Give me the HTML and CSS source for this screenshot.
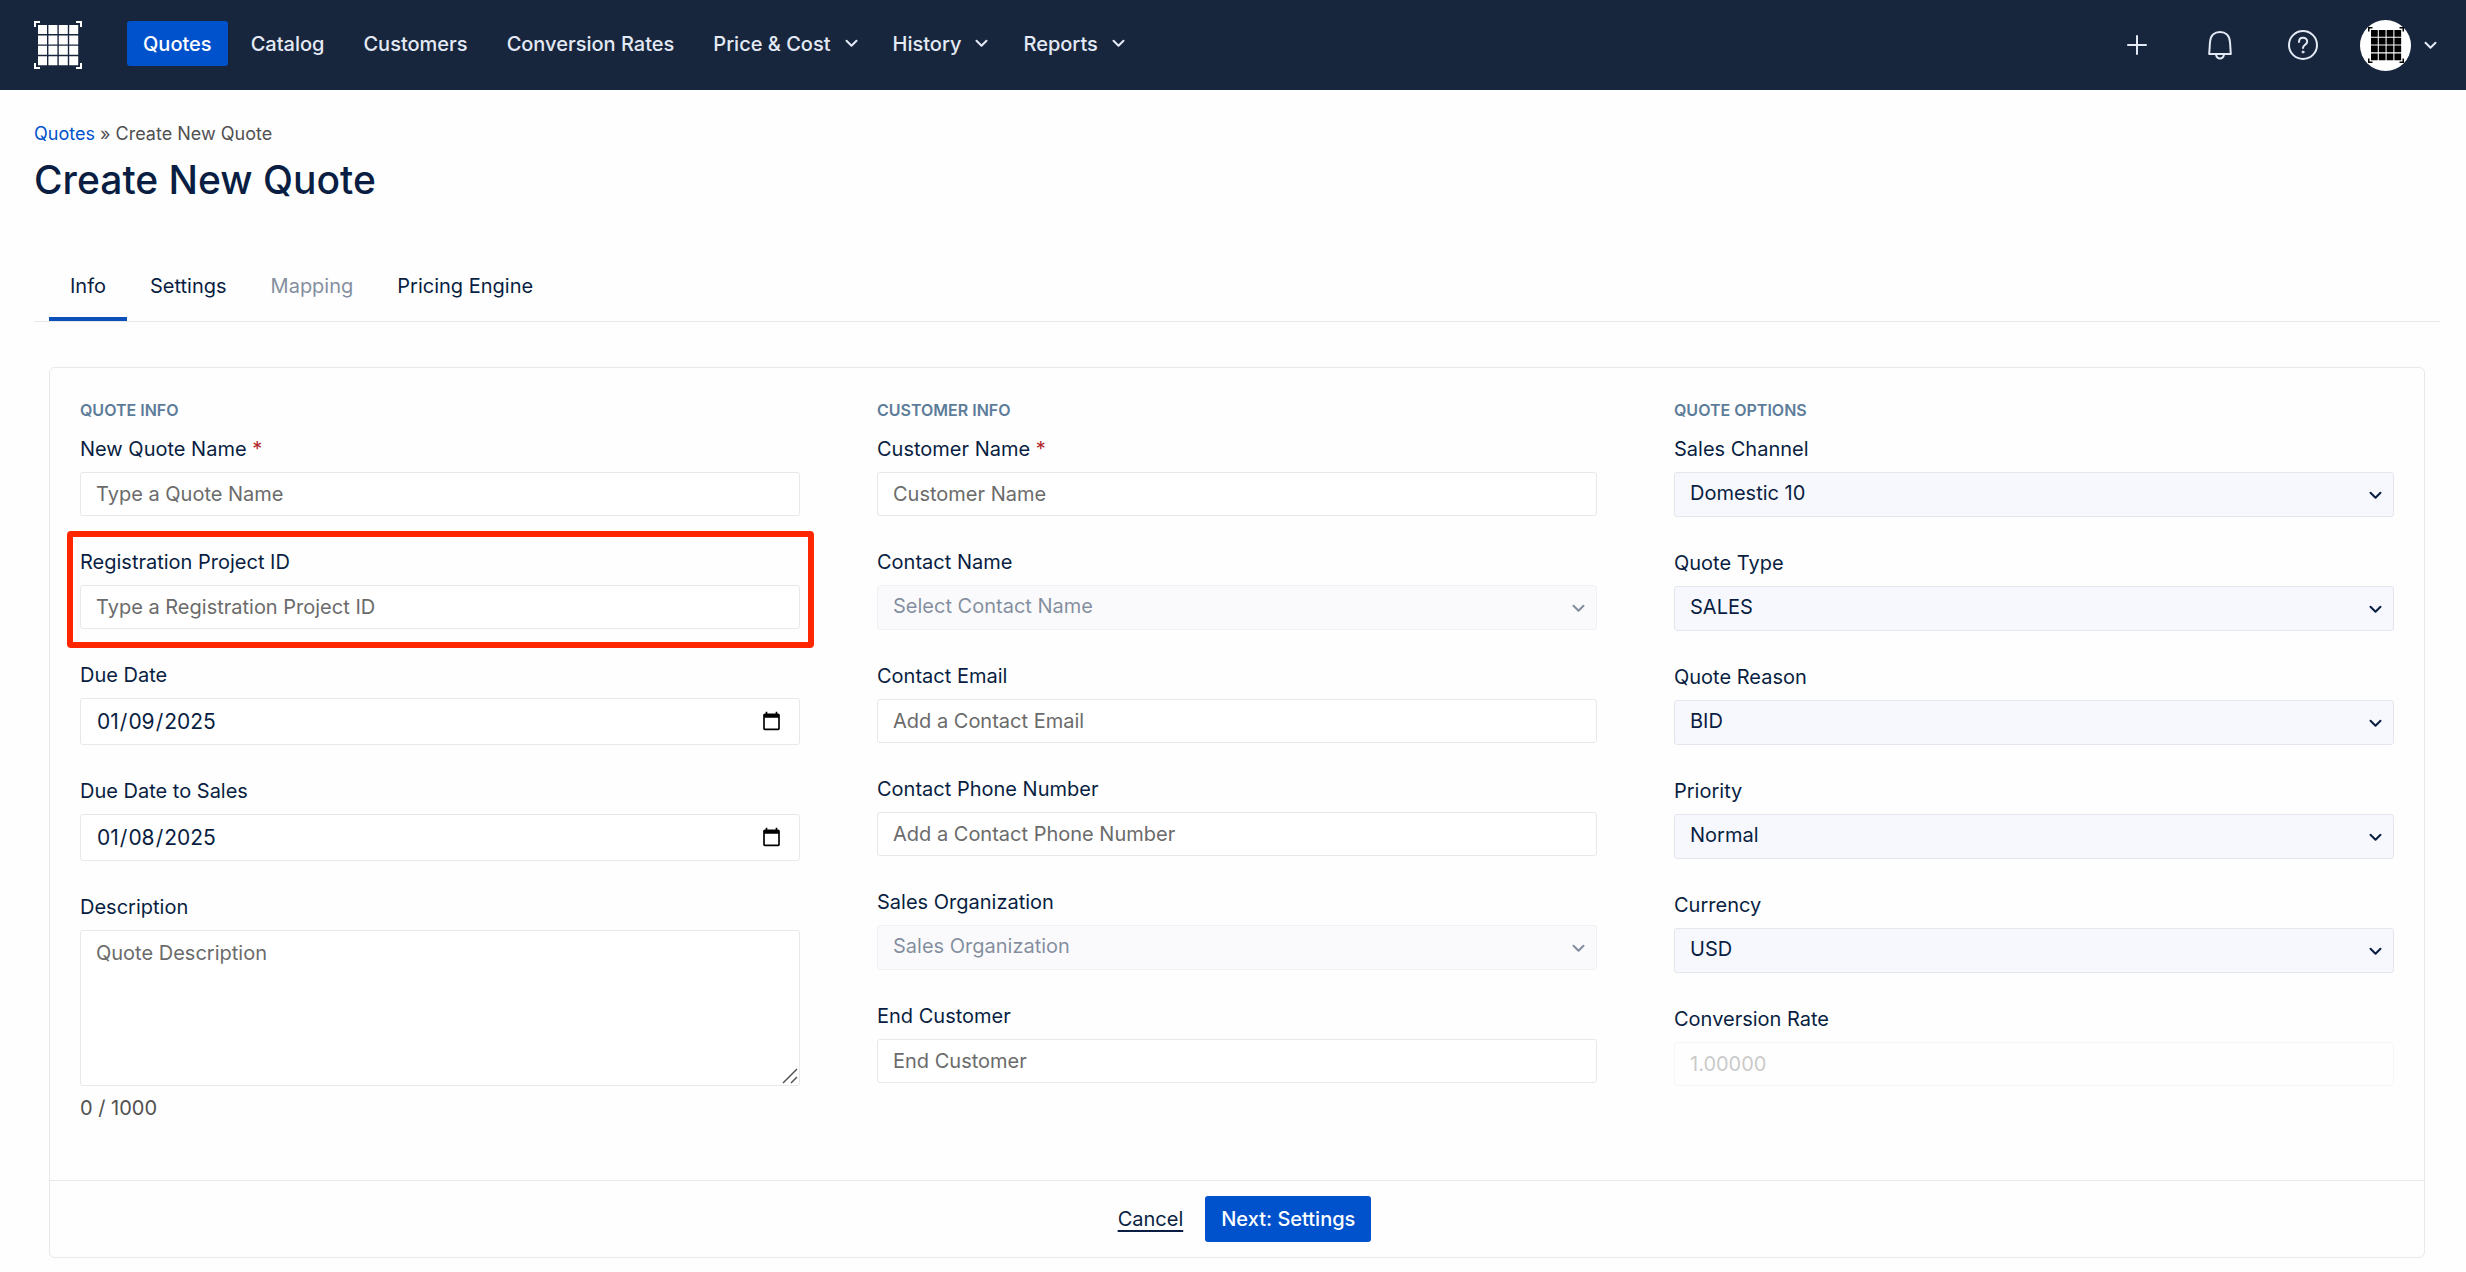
FILE: index.html
```html
<!DOCTYPE html>
<html lang="en-US">
<head>
  <meta charset="UTF-8">
  <meta name="viewport" content="width=device-width, initial-scale=1.0">
  <title>Create New Quote</title>
  <link rel="stylesheet" href="styles.css">
</head>
<body>
  <!-- shared icons -->
  <svg class="sprite" aria-hidden="true">
    <symbol id="chevron" viewBox="0 0 13 9">
      <path d="M1.5 1.8 6.5 6.8 11.5 1.8" fill="none" stroke="currentColor" stroke-width="2" stroke-linecap="round" stroke-linejoin="round"/>
    </symbol>
    <symbol id="grid" viewBox="0 0 48 48">
      <path d="M4 4h9v9H4zM14.400 4h9v9h-9zM24.800 4h9v9h-9zM35.200 4h9v9h-9zM4 14.400h9v9H4zM14.400 14.400h9v9h-9zM24.800 14.400h9v9h-9zM35.200 14.400h9v9h-9zM4 24.800h9v9H4zM14.400 24.800h9v9h-9zM24.800 24.800h9v9h-9zM35.200 24.800h9v9h-9zM4 35.200h9v9H4zM14.400 35.200h9v9h-9zM24.800 35.200h9v9h-9zM35.200 35.200h9v9h-9z" fill="currentColor"/>
      <path d="M1 6V1h5M42 1h5v5M47 42v5h-5M6 47H1v-5" fill="none" stroke="currentColor" stroke-width="2"/>
    </symbol>
  </svg>

  <header class="header">
    <a href="#" class="logo" aria-label="Home"><svg width="48" height="48"><use href="#grid"/></svg></a>
    <nav class="nav">
      <a href="#" class="active">Quotes</a>
      <a href="#">Catalog</a>
      <a href="#">Customers</a>
      <a href="#">Conversion Rates</a>
      <button type="button">Price &amp; Cost <svg width="13" height="9"><use href="#chevron"/></svg></button>
      <button type="button">History <svg width="13" height="9"><use href="#chevron"/></svg></button>
      <button type="button">Reports <svg width="13" height="9"><use href="#chevron"/></svg></button>
    </nav>
    <div class="actions">
      <button type="button" aria-label="Add">
        <svg width="32" height="32" viewBox="0 0 32 32" fill="none" stroke="currentColor" stroke-width="2" stroke-linecap="round"><path d="M16 7v18M7 16h18"/></svg>
      </button>
      <button type="button" aria-label="Notifications">
        <svg width="32" height="32" viewBox="0 0 32 32" fill="none" stroke="currentColor" stroke-width="2" stroke-linejoin="round"><path d="M5.200 25 6 13C6.500 6.500 10.500 3 16 3s9.500 3.500 10 10l.8 12zM12 25.500c.5 2.500 2 4 4 4s3.500-1.500 4-4"/></svg>
      </button>
      <button type="button" aria-label="Help">
        <svg width="32" height="32" viewBox="0 0 32 32" fill="none" stroke="currentColor" stroke-width="2" stroke-linecap="round" stroke-linejoin="round"><circle cx="16" cy="16" r="14"/><path d="M12 13c0-2.600 1.700-4.200 4-4.200s4.200 1.500 4.200 3.800c0 3.200-4.200 3.200-4.200 6.400"/><circle cx="16" cy="23" r="1" fill="currentColor" stroke-width="1"/></svg>
      </button>
      <button type="button" class="account" aria-label="Account">
        <span class="avatar"><svg width="36" height="36"><use href="#grid"/></svg></span>
        <svg width="13" height="9"><use href="#chevron"/></svg>
      </button>
    </div>
  </header>

  <main class="main">
    <div class="breadcrumb"><a href="#">Quotes</a> » Create New Quote</div>
    <h1>Create New Quote</h1>

    <div class="tabs" role="tablist">
      <button type="button" role="tab" aria-selected="true" class="active">Info</button>
      <button type="button" role="tab">Settings</button>
      <button type="button" role="tab" disabled>Mapping</button>
      <button type="button" role="tab">Pricing Engine</button>
    </div>

    <form class="card" id="quoteForm">
      <div class="columns">
        <section>
          <h2>QUOTE INFO</h2>
          <div class="field">
            <label for="quoteName">New Quote Name <span class="required">*</span></label>
            <input type="text" id="quoteName" placeholder="Type a Quote Name">
          </div>
          <div class="field highlight">
            <label for="projectId">Registration Project ID</label>
            <input type="text" id="projectId" placeholder="Type a Registration Project ID">
          </div>
          <div class="field">
            <label for="dueDate">Due Date</label>
            <input type="date" id="dueDate" value="2025-01-09">
          </div>
          <div class="field">
            <label for="dueDateSales">Due Date to Sales</label>
            <input type="date" id="dueDateSales" value="2025-01-08">
          </div>
          <div class="field">
            <label for="description">Description</label>
            <div class="textarea-wrap">
              <textarea id="description" placeholder="Quote Description"></textarea>
              <svg class="grip" width="16" height="16" viewBox="0 0 16 16" stroke="#555" stroke-width="1.500"><path d="M1 15 15 1M9 15l6-6"/></svg>
            </div>
            <div class="counter">0 / 1000</div>
          </div>
        </section>

        <section>
          <h2>CUSTOMER INFO</h2>
          <div class="field">
            <label for="customerName">Customer Name <span class="required">*</span></label>
            <input type="text" id="customerName" placeholder="Customer Name">
          </div>
          <div class="field">
            <label for="contactName">Contact Name</label>
            <div class="select disabled">
              <select id="contactName" disabled><option>Select Contact Name</option></select>
              <svg width="13" height="9"><use href="#chevron"/></svg>
            </div>
          </div>
          <div class="field">
            <label for="contactEmail">Contact Email</label>
            <input type="email" id="contactEmail" placeholder="Add a Contact Email">
          </div>
          <div class="field">
            <label for="contactPhone">Contact Phone Number</label>
            <input type="tel" id="contactPhone" placeholder="Add a Contact Phone Number">
          </div>
          <div class="field">
            <label for="salesOrg">Sales Organization</label>
            <div class="select disabled">
              <select id="salesOrg" disabled><option>Sales Organization</option></select>
              <svg width="13" height="9"><use href="#chevron"/></svg>
            </div>
          </div>
          <div class="field">
            <label for="endCustomer">End Customer</label>
            <input type="text" id="endCustomer" placeholder="End Customer">
          </div>
        </section>

        <section>
          <h2>QUOTE OPTIONS</h2>
          <div class="field">
            <label for="salesChannel">Sales Channel</label>
            <div class="select">
              <select id="salesChannel"><option>Domestic 10</option></select>
              <svg width="13" height="9"><use href="#chevron"/></svg>
            </div>
          </div>
          <div class="field">
            <label for="quoteType">Quote Type</label>
            <div class="select">
              <select id="quoteType"><option>SALES</option></select>
              <svg width="13" height="9"><use href="#chevron"/></svg>
            </div>
          </div>
          <div class="field">
            <label for="quoteReason">Quote Reason</label>
            <div class="select">
              <select id="quoteReason"><option>BID</option></select>
              <svg width="13" height="9"><use href="#chevron"/></svg>
            </div>
          </div>
          <div class="field">
            <label for="priority">Priority</label>
            <div class="select">
              <select id="priority"><option>Normal</option></select>
              <svg width="13" height="9"><use href="#chevron"/></svg>
            </div>
          </div>
          <div class="field">
            <label for="currency">Currency</label>
            <div class="select">
              <select id="currency"><option>USD</option></select>
              <svg width="13" height="9"><use href="#chevron"/></svg>
            </div>
          </div>
          <div class="field">
            <label for="rate">Conversion Rate</label>
            <input type="text" id="rate" placeholder="1.00000" disabled>
          </div>
        </section>
      </div>

      <div class="card-footer">
        <a href="#">Cancel</a>
        <button type="submit">Next: Settings</button>
      </div>
    </form>
  </main>
</body>
</html>
```
FILE: styles.css
```css
* {
  box-sizing: border-box;
}

body {
  margin: 0;
  font-family: Inter, "Liberation Sans", sans-serif;
  font-size: 20px;
  line-height: 32px;
  color: #091e42;
  background: #fefefe;
}

button, input, select, textarea {
  font: inherit;
  color: inherit;
}

.sprite {
  display: none;
}

/* Header */
.header {
  display: flex;
  align-items: center;
  height: 90px;
  padding: 0 29px 0 34px;
  background: #18263d;
  color: #e3eaf5;
}

.logo {
  display: flex;
  margin-right: 45px;
  color: #fff;
}

.nav {
  display: flex;
  gap: 7px;
  margin-bottom: 3px;
}

.nav a, .nav button {
  display: flex;
  align-items: center;
  height: 45px;
  padding: 0 16px;
  border: none;
  border-radius: 3px;
  background: none;
  font-weight: 500;
  color: inherit;
  text-decoration: none;
  cursor: pointer;
}

.nav button {
  gap: 14px;
  padding-right: 12px;
}

.nav a.active {
  background: #0052cc;
  color: #fff;
}

.actions {
  display: flex;
  align-items: center;
  gap: 51px;
  margin-left: auto;
}

.actions button {
  display: flex;
  align-items: center;
  padding: 0;
  border: none;
  background: none;
  cursor: pointer;
}

.actions .account {
  gap: 13px;
  margin-left: -10px;
}

.avatar {
  display: flex;
  align-items: center;
  justify-content: center;
  width: 51px;
  height: 51px;
  border-radius: 50%;
  background: #fff;
  color: #000;
}

/* Page title and tabs */
.main {
  padding: 32px 26px 15px 34px;
}

.breadcrumb {
  font-size: 18px;
  line-height: 24px;
  color: #505050;
}

.breadcrumb a {
  color: #0052cc;
  text-decoration: none;
}

h1 {
  margin: 10px 0 51px;
  font-size: 39px;
  font-weight: 500;
  line-height: 48px;
}

.tabs {
  display: flex;
  gap: 2px;
  padding: 0 15px;
  border-bottom: 1px solid #e6e8ea;
}

.tabs button {
  padding: 15px 21px;
  border: none;
  border-bottom: 4px solid transparent;
  background: none;
  cursor: pointer;
}

.tabs button.active {
  border-bottom-color: #0c4fb8;
}

.tabs button:disabled {
  color: #848f9f;
}

/* Form card */
.card {
  margin: 45px 15px 0;
  border: 1px solid #e8e9eb;
  border-radius: 6px;
}

.columns {
  display: grid;
  grid-template-columns: repeat(3, 1fr);
  column-gap: 77px;
  padding: 30px 30px 26px;
}

h2 {
  margin: 0 0 11px;
  font-size: 16px;
  font-weight: 600;
  line-height: 24px;
  color: #5c7c99;
}

.field {
  margin-bottom: 30px;
}

.field label {
  display: block;
  margin-bottom: 7px;
}

.required {
  color: #b3282d;
}

input, select, textarea {
  display: block;
  width: 100%;
  height: 44px;
  padding: 0 15px;
  border: 1px solid #e6e9eb;
  border-radius: 3px;
  background: #fff;
}

input::placeholder, textarea::placeholder {
  color: #6b6b6b;
}

input[type="date"] {
  height: 47px;
  font-size: 21px;
}

input:disabled {
  opacity: 0.35;
}

.select {
  position: relative;
}

.select select {
  appearance: none;
  height: 45px;
  padding-bottom: 3px;
  background: #f7f8fd;
  border-color: #e4e6ee;
  opacity: 1;
}

.select svg {
  position: absolute;
  top: 19px;
  right: 12px;
  pointer-events: none;
}

.select.disabled {
  opacity: 0.5;
}

.textarea-wrap {
  position: relative;
}

textarea {
  height: 156px;
  padding: 6px 15px;
  resize: vertical;
}

textarea::-webkit-resizer {
  background: none;
}

.grip {
  position: absolute;
  right: 2px;
  bottom: 2px;
  pointer-events: none;
}

.counter {
  margin-top: 6px;
  color: #505050;
}

/* Red frame drawn round the highlighted field */
.highlight {
  position: relative;
}

.highlight::after {
  content: "";
  position: absolute;
  inset: -15px -14px -19px -13px;
  border: 6px solid #ff2600;
  border-radius: 4px;
  pointer-events: none;
}

.card-footer {
  display: flex;
  align-items: center;
  justify-content: center;
  gap: 22px;
  padding: 15px 15px 15px 30px;
  border-top: 1px solid #e8e9eb;
}

.card-footer a {
  color: inherit;
  text-underline-offset: 4px;
}

.card-footer button {
  height: 46px;
  padding: 0 16px;
  border: none;
  border-radius: 3px;
  background: #0052cc;
  color: #fff;
  font-weight: 500;
  cursor: pointer;
}
```
